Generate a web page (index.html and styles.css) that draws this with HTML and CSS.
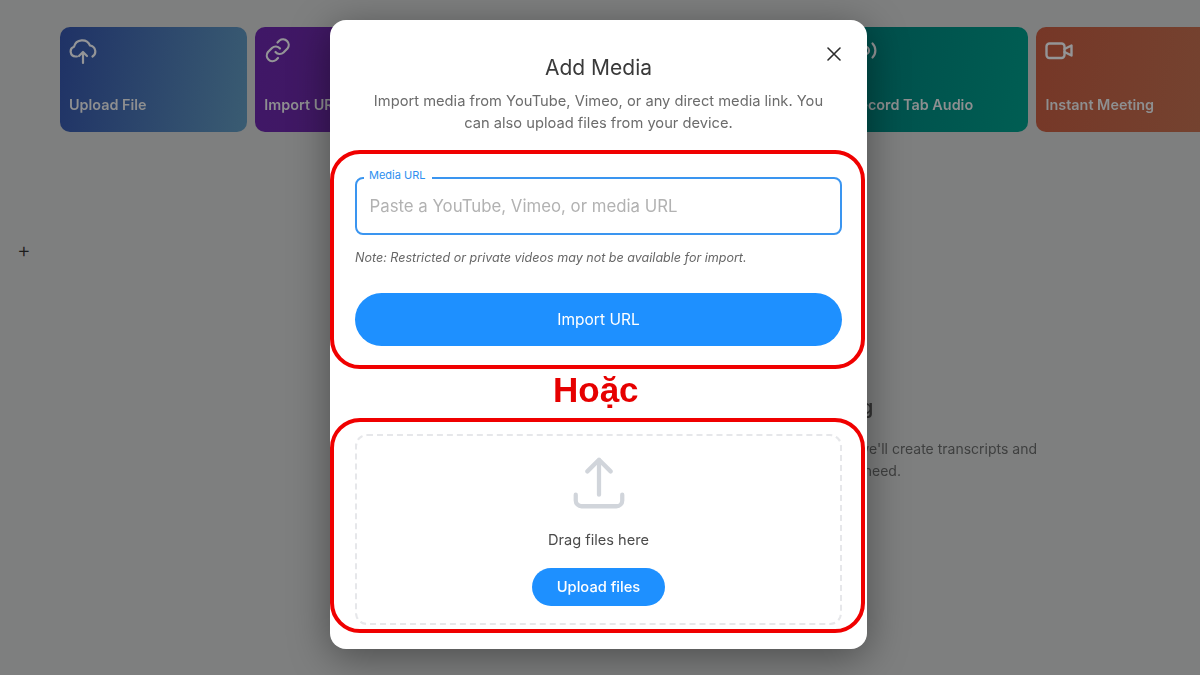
FILE: index.html
```html
<!DOCTYPE html>
<html lang="en">
<head>
<meta charset="utf-8">
<title>Add Media</title>
<link rel="stylesheet" href="styles.css">
</head>
<body>
<main class="page">
  <section class="cards">
    <div class="card card-blue">
      <svg class="card-icon" viewBox="0 0 28 28" fill="none" stroke="currentColor" stroke-width="2.200" stroke-linecap="round" stroke-linejoin="round"><path d="M8 19.500H6.500A5 5 0 0 1 5 9.800 8.500 8.500 0 0 1 21 8.500 6 6 0 0 1 23.500 19.500"/><path d="M14 26V15.500M10 19 14 15 18 19"/></svg>
      <span class="card-label">Upload File</span>
    </div>
    <div class="card card-purple">
      <svg class="card-icon" viewBox="0 0 28 28" fill="none" stroke="currentColor" stroke-width="2.200" stroke-linecap="round" stroke-linejoin="round"><path d="M11.500 15a5.500 5.500 0 0 0 8 .5l4-4a5.700 5.700 0 0 0-8-8l-2 2"/><path d="M16 11.500a5.500 5.500 0 0 0-8-.5l-4 4a5.700 5.700 0 0 0 8 8l2-2"/></svg>
      <span class="card-label">Import URL</span>
    </div>
    <div class="card card-pink"></div>
    <div class="card card-cyan"></div>
    <div class="card card-green">
      <svg class="card-icon" viewBox="0 0 28 28" fill="none" stroke="currentColor" stroke-width="2.200" stroke-linecap="round" stroke-linejoin="round"><circle cx="15" cy="13.500" r="4"/><path d="M22.500 6.500a10 10 0 0 1 0 14"/></svg>
      <span class="card-label">Record Tab Audio</span>
    </div>
    <div class="card card-orange">
      <svg class="card-icon" viewBox="0 0 28 28" fill="none" stroke="currentColor" stroke-width="2.400" stroke-linecap="round" stroke-linejoin="round"><rect x="1.500" y="6.500" width="18" height="14.500" rx="3"/><path d="m19.500 12 7-3.500v10l-7-3.500"/></svg>
      <span class="card-label">Instant Meeting</span>
    </div>
  </section>
  <div class="plus">+</div>
  <section class="empty">
    <h2 class="empty-title">Get started uploading</h2>
    <p class="empty-text">Upload or record media and we'll create transcripts and<br>and get you the answers you need.</p>
  </section>
</main>

<div class="overlay">
  <div class="modal">
    <svg class="close" viewBox="0 0 14 14" fill="none" stroke="currentColor" stroke-width="1.600" stroke-linecap="round"><path d="M1 1l12 12M13 1 1 13"/></svg>
    <h1 class="title">Add Media</h1>
    <p class="desc">Import media from YouTube, Vimeo, or any direct media link. You can also upload files from your device.</p>

    <div class="field">
      <span class="field-label">Media URL</span>
      <span class="placeholder">Paste a YouTube, Vimeo, or media URL</span>
    </div>
    <p class="note">Note: Restricted or private videos may not be available for import.</p>
    <div class="btn-wide">Import URL</div>

    <div class="drop">
      <svg class="drop-icon" viewBox="0 0 24 24" fill="none" stroke="currentColor" stroke-width="1.650" stroke-linecap="round" stroke-linejoin="round"><path d="M3 16.500v2.250A2.250 2.250 0 0 0 5.250 21h13.500A2.250 2.250 0 0 0 21 18.750V16.500m-13.500-9L12 3m0 0 4.500 4.500M12 3v13.500"/></svg>
      <p class="drop-text">Drag files here</p>
      <div class="btn-small">Upload files</div>
    </div>

    <div class="mark mark-top"></div>
    <div class="mark-word">Hoặc</div>
    <div class="mark mark-bottom"></div>
  </div>
</div>
</body>
</html>
```

FILE: styles.css
```css
* { box-sizing: border-box; }
html, body { margin: 0; height: 100%; overflow: hidden; }
body { font-family: Inter, "Noto Sans", sans-serif; background: #7e7f7f; }

.page {
  height: 675px;
  padding: 27px 0 0 60px;
}
.cards { display: flex; gap: 8px; width: 1164px; filter: blur(0.6px); }
.card {
  flex: 0 0 187.300px;
  height: 105px;
  border-radius: 10px;
  padding: 10px 9px 0;
  display: flex;
  flex-direction: column;
  color: #8e8f90;
}
.card-icon { width: 28px; height: 28px; display: block; color: #949597; }
.card-label {
  position: absolute;
  margin-top: 58px;
  font-size: 14.400px;
  line-height: 20px;
  font-weight: 600;
  white-space: nowrap;
}
.card-blue { background: linear-gradient(100deg, #1f3266, #3a5c72); }
.card-purple { background: linear-gradient(100deg, #401767, #401b5e); }
.card-pink { background: #5c1e44; }
.card-cyan { background: #195164; }
.card-green { background: linear-gradient(100deg, #004c4a, #005e53); }
.card-orange { background: linear-gradient(100deg, #763727, #744431); }

.plus {
  margin: 106px 0 0 -43px;
  width: 14px;
  font-size: 21px;
  line-height: 24px;
  color: #1c1c1c;
  font-weight: 300;
}
.empty { margin: 131px 0 0 609px; width: 460px; filter: blur(0.3px); }
.empty-title { margin: 0; font-size: 19.500px; line-height: 28px; font-weight: 600; color: #333; }
.empty-text { margin: 17px 0 0; font-size: 14px; line-height: 22px; color: #3f4040; white-space: nowrap; }

.overlay { position: fixed; inset: 0; }
.modal {
  position: absolute;
  left: 330px;
  top: 20px;
  width: 537px;
  height: 629px;
  padding: 33px 25px 0;
  background: #fff;
  border-radius: 16px;
  box-shadow: 0 8px 40px rgba(0,0,0,.4);
  display: flex;
  flex-direction: column;
}
.close { position: absolute; top: 27px; right: 26px; width: 14px; height: 14px; color: #2d2d2d; }
.title {
  margin: 0;
  text-align: center;
  font-size: 21px;
  line-height: 30px;
  font-weight: 400;
  color: #3a3a3a;
}
.desc {
  margin: 7px 8px 0;
  text-align: center;
  font-size: 14.700px;
  line-height: 22px;
  color: #6c6c6c;
}
.field {
  position: relative;
  margin-top: 43px;
  height: 58px;
  border: 2px solid #3a95f0;
  border-radius: 8px;
  padding: 0 12.500px;
  display: flex;
  align-items: center;
}
.field-label {
  position: absolute;
  left: 7px;
  top: -11px;
  padding: 0 6px 0 5px;
  background: #fff;
  font-size: 11px;
  line-height: 14px;
  color: #2d8fef;
}
.placeholder { font-size: 16.800px; color: #b2b2b2; }
.note {
  margin: 14px 0 0;
  font-size: 12.550px;
  line-height: 18px;
  font-style: italic;
  color: #666;
}
.btn-wide {
  margin-top: 26px;
  height: 53px;
  border-radius: 27px;
  background: #1e90ff;
  color: #fff;
  font-size: 15.500px;
  display: flex;
  align-items: center;
  justify-content: center;
}
.drop {
  margin-top: 88px;
  height: 191px;
  border: 2px dashed #e6e7ea;
  border-radius: 12px;
  padding-top: 16px;
  display: flex;
  flex-direction: column;
  align-items: center;
}
.drop-icon { width: 62px; height: 62px; color: #d1d5db; display: block; }
.drop-text { margin: 16px 0 0; font-size: 14.600px; line-height: 20px; color: #4b4b4b; }
.btn-small {
  margin-top: 18px;
  width: 133px;
  height: 38px;
  border-radius: 19px;
  background: #1e90ff;
  color: #fff;
  font-size: 14.700px;
  font-weight: 500;
  display: flex;
  align-items: center;
  justify-content: center;
  padding-bottom: 1px;
}
.mark {
  position: absolute;
  left: 0;
  width: 535px;
  border: 4px solid #f00000;
  border-radius: 30px;
}
.mark-top { top: 130px; height: 219px; }
.mark-bottom { top: 398px; height: 215px; }
.mark-word {
  position: absolute;
  left: 223px;
  top: 350px;
  font-family: "Liberation Sans", Arial, sans-serif;
  font-size: 35px;
  line-height: 40px;
  font-weight: 700;
  color: #e60000;
}
```
